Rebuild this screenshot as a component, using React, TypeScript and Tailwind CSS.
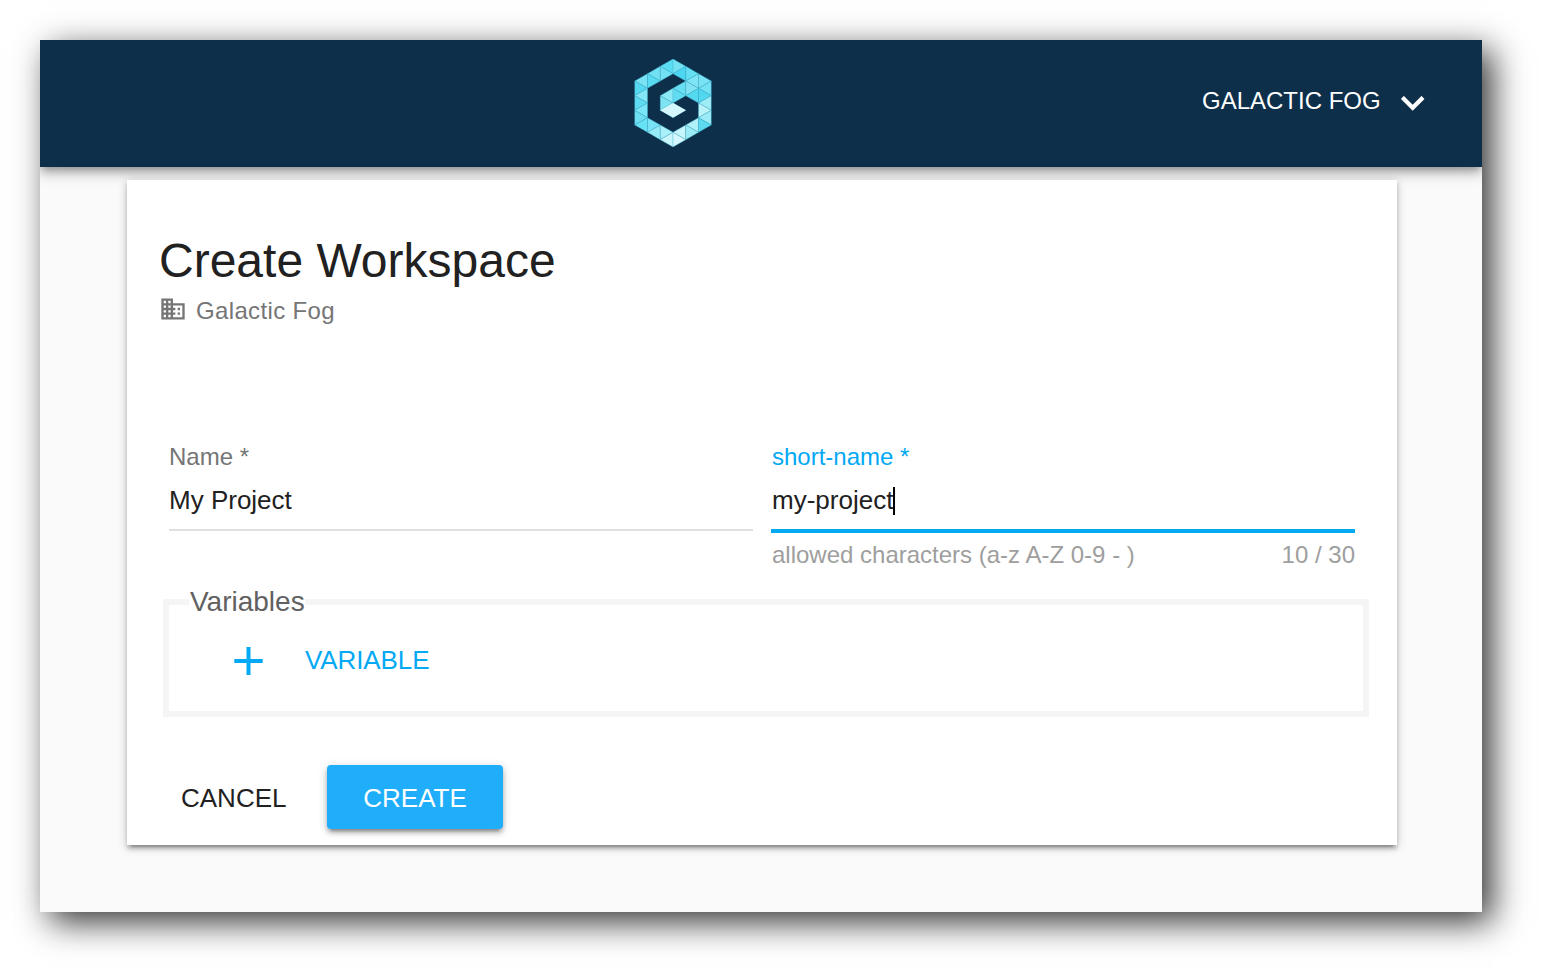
type Cell = [column: number, row: number, fill: string];

const LOGO_CELLS: Cell[] = [
  [0, 3, '#79e3f5'], [0, 4, '#55d9f2'], [0, 5, '#83e5f6'], [0, 6, '#5edcf2'], [0, 7, '#7ae6f8'], [0, 8, '#6edff3'], [0, 9, '#68e2f5'],
  [1, 2, '#70e0f3'], [1, 3, '#59dcf2'], [1, 9, '#78e3f5'], [1, 10, '#97ebf7'],
  [2, 1, '#5adcf2'], [2, 2, '#72e0f3'], [2, 5, '#8de8f5'], [2, 6, '#80e3f3'], [2, 7, '#a0edf8'], [2, 10, '#a9f0fa'], [2, 11, '#c9f6fc'],
  [3, 1, '#74e1f3'], [3, 2, '#4cd7f0'], [3, 4, '#67def2'], [3, 5, '#62dcf1'], [3, 7, '#d5f8fd'], [3, 10, '#c6f5fc'], [3, 11, '#d3f7fd'],
  [4, 2, '#64def2'], [4, 3, '#7ce4f4'], [4, 4, '#7fe3f4'], [4, 5, '#55d9f0'], [4, 9, '#aff0f9'], [4, 10, '#9cecf8'],
  [5, 3, '#79e3f5'], [5, 4, '#74e0f3'], [5, 5, '#51d8f0'], [5, 6, '#9eecf6'], [5, 7, '#baf2fa'], [5, 8, '#9cecf7'], [5, 9, '#5ddbf1'],
];

const COL = 12.75;
const ROW = 7.33;

function cellPoints(c: number, r: number) {
  const tip = (c + r) % 2 === 1 ? c : c + 1;
  const base = tip === c ? c + 1 : c;
  return [[tip, r], [base, r - 1], [base, r + 1]]
    .map(([x, y]) => `${(x * COL).toFixed(2)},${(y * ROW).toFixed(2)}`)
    .join(' ');
}

function Logo() {
  return (
    <svg className="block h-[88px] w-[78px]" viewBox="-0.75 0 78 88" aria-hidden="true">
      {LOGO_CELLS.map(([c, r, fill]) => (
        <polygon key={`${c}-${r}`} points={cellPoints(c, r)} fill={fill} stroke="#3fb4d0" strokeWidth="0.35" strokeLinejoin="round" />
      ))}
      <polygon points="25.5,51.3 38.25,44 51,51.3 38.25,58.6" fill="#d3f7fd" />
    </svg>
  );
}

function Header() {
  return (
    <header className="flex h-[127px] bg-[#0d2f4a] pl-[594px] text-white shadow-[0_4px_8px_-2px_rgba(0,0,0,0.3),0_8px_10px_rgba(0,0,0,0.14),0_2px_20px_rgba(0,0,0,0.12)]">
      <div className="pt-[19px]">
        <Logo />
      </div>
      <button className="mt-[49px] ml-auto flex h-6 items-start pr-[57px] text-2xl leading-6">
        <span className="w-[199px] text-left whitespace-nowrap">GALACTIC FOG</span>
        <svg className="mt-[7px] h-[15px] w-6" viewBox="0 0 24 15" fill="none" stroke="currentColor" strokeWidth="4.2" aria-hidden="true">
          <path d="M1.4 1.4 11.7 11.7 22 1.4" />
        </svg>
      </button>
    </header>
  );
}

export default function App() {
  return (
    <div className="h-[972px] w-[1542px] overflow-hidden bg-white p-10 font-['Liberation_Sans',Arial,sans-serif]">
      <div className="h-[872px] w-[1442px] overflow-visible bg-[#fafafa] shadow-[10px_10px_32px_rgba(0,0,0,0.8)]">
        <div className="h-[872px] overflow-hidden">
          <Header />
          <main className="relative mt-[13px] ml-[87px] h-[665px] w-[1270px] bg-white pt-[57px] text-[#212121] shadow-[0_2px_10px_rgba(0,0,0,0.2),0_4px_4px_rgba(0,0,0,0.2),0_6px_2px_-4px_rgba(0,0,0,0.2)]">
            <h1 className="ml-[32px] text-5xl leading-[48px] whitespace-nowrap">Create Workspace</h1>
            <div className="mt-[14px] ml-[32px] flex h-6 text-2xl leading-6 text-[#757575]">
              <svg className="-mt-1 h-7 w-7" viewBox="0 0 24 24" fill="currentColor" aria-hidden="true">
                <path d="M12 7V3H2v18h20V7H12zM6 19H4v-2h2v2zm0-4H4v-2h2v2zm0-4H4V9h2v2zm0-4H4V5h2v2zm4 12H8v-2h2v2zm0-4H8v-2h2v2zm0-4H8V9h2v2zm0-4H8V5h2v2zm10 12h-8v-2h2v-2h-2v-2h2v-2h-2V9h8v10zm-2-8h-2v2h2v-2zm0 4h-2v2h2v-2z" />
              </svg>
              <span className="ml-[9px] tracking-[0.35px]">Galactic Fog</span>
            </div>

            <form className="mt-[122px]">
              <div className="ml-[42px] flex h-[122px] gap-[18px]">
                <div className="w-[584px]">
                  <label className="block text-2xl leading-6 text-[#757575]">Name *</label>
                  <div className="mt-[18px] h-[44px] border-b-2 border-[#e0e0e0] text-[26px] leading-[26px]">My Project</div>
                </div>
                <div className="w-[584px]">
                  <label className="block pl-px text-2xl leading-6 text-[#03a9f4]">short-name *</label>
                  <div className="mt-[18px] flex h-[46px] border-b-4 border-[#03a9f4] pl-px text-[26px] leading-[26px]">
                    <span>my-project</span>
                    <span className="h-7 w-[2px] bg-black" />
                  </div>
                  <div className="mt-[10px] flex justify-between pl-px text-2xl leading-6 text-[#9e9e9e]">
                    <span>allowed characters (a-z A-Z 0-9 - )</span>
                    <span>10 / 30</span>
                  </div>
                </div>
              </div>

              <div className="mt-[32px] ml-[36px] h-[118px] w-[1206px] border-[6px] border-[#f5f5f5]">
                <div className="-mt-[17px] ml-5 h-7 w-[116px] bg-white pl-px text-[28px] leading-7 whitespace-nowrap text-[#616161]">Variables</div>
                <button type="button" className="mt-[31px] ml-[65px] flex h-[28px] text-[26px] leading-[26px] text-[#03a9f4]">
                  <svg className="h-7 w-[29px]" viewBox="0 0 29 28" fill="none" stroke="currentColor" strokeWidth="4" aria-hidden="true">
                    <path d="M14.5 0v28M.3 14h28.4" />
                  </svg>
                  <span className="ml-[42px] tracking-[-0.1px]">VARIABLE</span>
                </button>
              </div>

              <div className="mt-[48px] ml-[54px] flex h-16 text-[26px] leading-[26px]">
                <button type="button" className="w-[146px] pt-[2px] text-left">CANCEL</button>
                <button type="button" className="w-[176px] rounded bg-[#20aefa] pt-[2px] text-white shadow-[0_2px_10px_rgba(0,0,0,0.2),0_4px_4px_rgba(0,0,0,0.2),0_6px_2px_-4px_rgba(0,0,0,0.2)]">CREATE</button>
              </div>
            </form>
          </main>
        </div>
      </div>
    </div>
  );
}
